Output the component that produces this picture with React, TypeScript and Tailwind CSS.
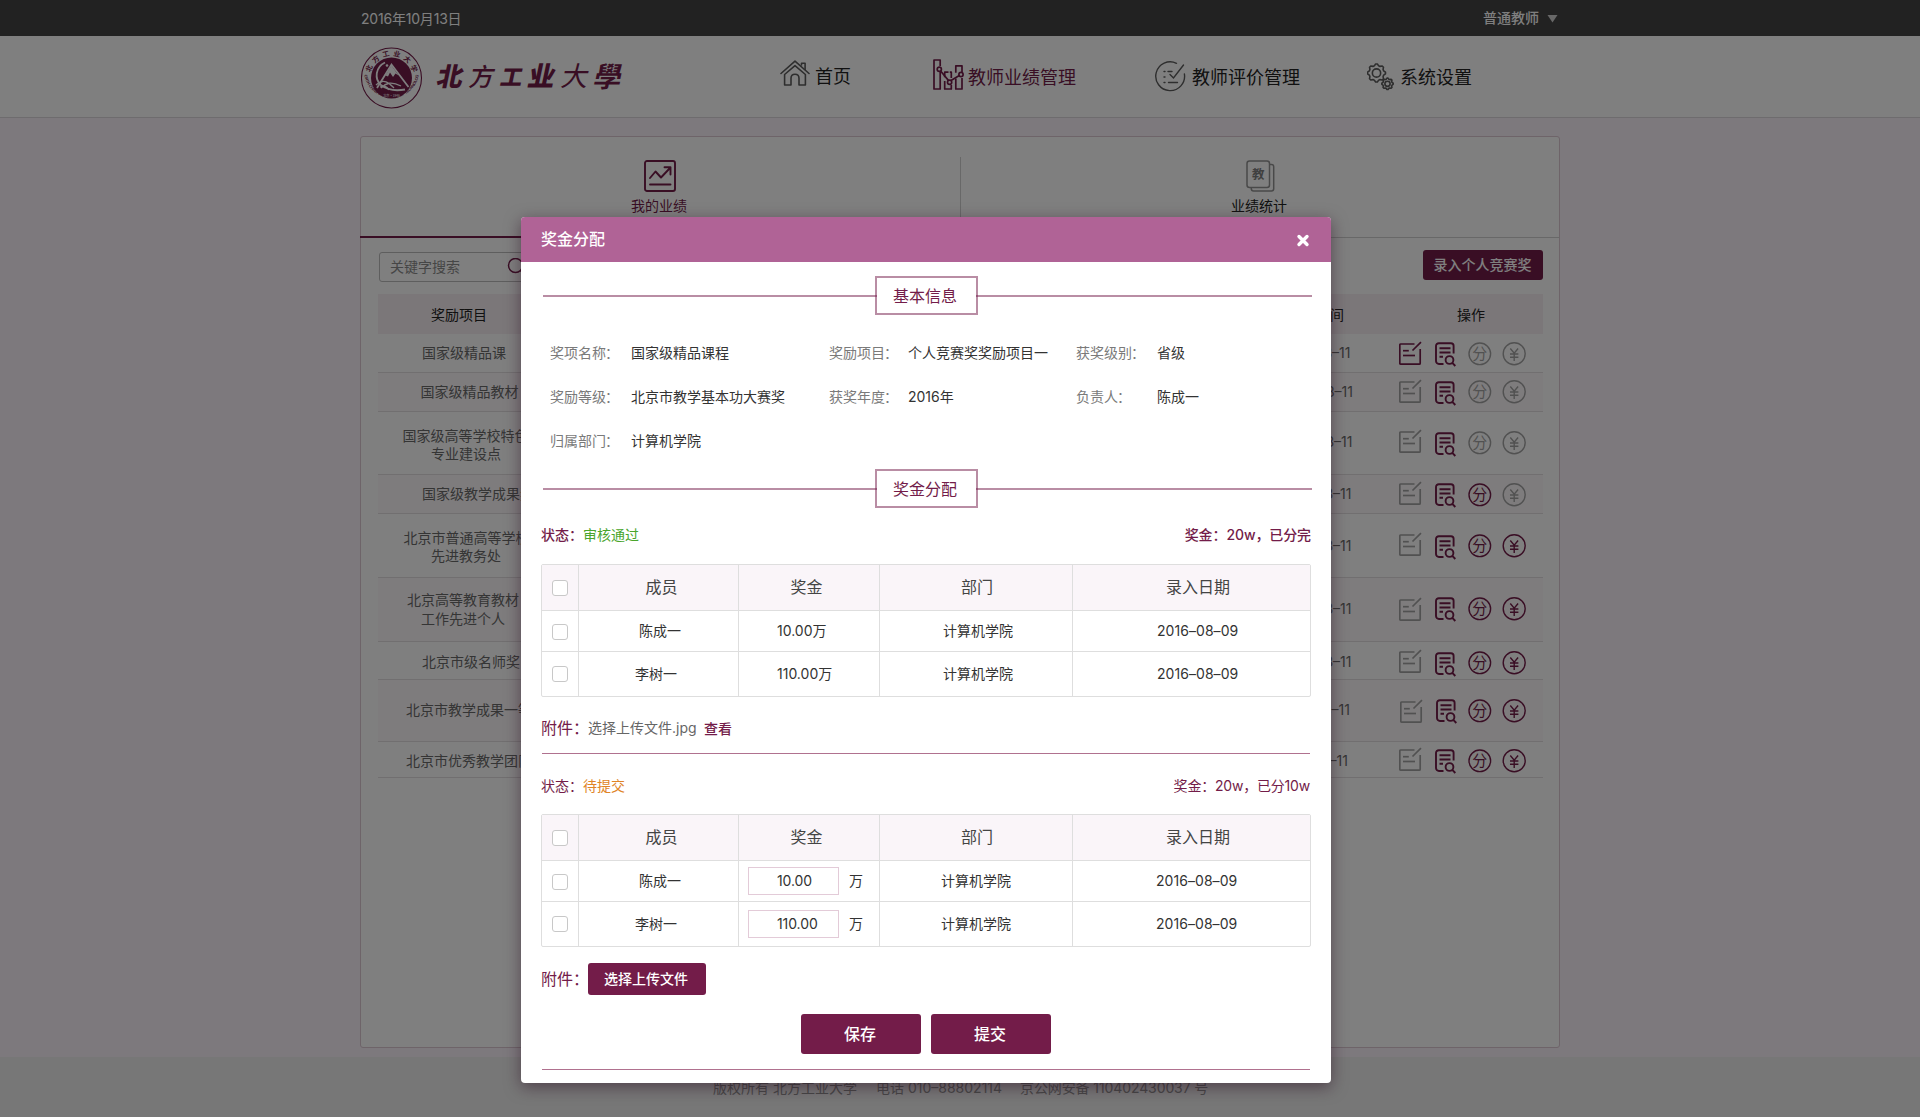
import React from "react";

const BRAND = "#731c49";
const GRAY = "#a3a3a3";

function HomeIcon() {
  return (
    <svg width="30" height="26" viewBox="0 0 30 26" fill="none" stroke="#5c5c5c" strokeWidth="1.6" strokeLinejoin="round" strokeLinecap="round">
      <path d="M1 13.5 15 1.2 29 13.5" />
      <path d="M21.5 5V3.2h3.6V9.5" />
      <path d="M4.6 14.5 15 5.6 25.4 14.5V25H19V18.2c0-2.4-1.6-4-4-4s-4 1.6-4 4V25H4.6Z" />
    </svg>
  );
}

function ChartIcon() {
  return (
    <svg width="31" height="31" viewBox="0 0 31 31" fill="none" stroke={BRAND} strokeWidth="1.7" strokeLinejoin="round">
      <path d="M7.2 7V1H1v29h6.2V13" />
      <path d="M15.5 13.2h-3.8v5M11.7 22v8h6.6v-4M18.3 19v-5.8h-1.5" />
      <path d="M29 13V6.8h-6.2v7M22.8 19.5V30H29V19" />
      <circle cx="6.3" cy="10.2" r="2.1" />
      <circle cx="16.6" cy="23.2" r="2.1" />
      <circle cx="28" cy="15.5" r="2.1" />
      <path d="M7.6 12 15.4 21.4M18 21.6 26.3 16.6" />
    </svg>
  );
}

function ReviewIcon() {
  return (
    <svg width="31" height="31" viewBox="0 0 31 31" fill="none" stroke="#5c5c5c" strokeWidth="1.4" strokeLinecap="round">
      <path d="M21.500 2.300A14.400 14.400 0 1 0 29.400 13" />
      <path d="M28.500 4 18.500 17l-3.500-3.500" />
      <path d="M9 10.500h1M13 10.500h4M9 16h1M9 21.500h1M13.500 21.500h9" />
    </svg>
  );
}

function Gear({ cx, cy, r }: { cx: number; cy: number; r: number }) {
  const pts: string[] = [];
  for (let i = 0; i < 32; i++) {
    const rr = i % 4 < 2 ? r : r * 0.83;
    const a = (i / 32) * Math.PI * 2 - Math.PI / 2 - Math.PI / 32;
    pts.push(`${(cx + rr * Math.cos(a)).toFixed(2)},${(cy + rr * Math.sin(a)).toFixed(2)}`);
  }
  return (
    <>
      <polygon points={pts.join(" ")} />
      <circle cx={cx} cy={cy} r={r * 0.46} />
    </>
  );
}

function GearsIcon() {
  return (
    <svg width="28" height="28" viewBox="0 0 28 28" fill="none" stroke="#5c5c5c" strokeWidth="1.6" strokeLinejoin="round">
      <Gear cx={9.5} cy={10} r={9} />
      <Gear cx={20.5} cy={20.8} r={5.7} />
    </svg>
  );
}

function Seal() {
  return (
    <svg width="62" height="62" viewBox="0 0 62 62">
      <circle cx="30.500" cy="31" r="30" fill="none" stroke={BRAND} strokeWidth="1.100" />
      <circle cx="30.500" cy="31" r="20.500" fill={BRAND} />
      <defs>
        <path id="sealTop" d="M8.500 31a22 22 0 0 1 44 0" />
        <path id="sealBottom" d="M3.300 28a27.600 27.600 0 0 0 54.400 0" />
      </defs>
      <text fill={BRAND} fontSize="7" fontWeight="700" fontFamily="'Noto Sans CJK SC', sans-serif">
        <textPath href="#sealTop" startOffset="50%" textAnchor="middle" textLength="58">北方工业大学</textPath>
      </text>
      <text fill={BRAND} fontSize="4" fontWeight="700" fontFamily="'Liberation Sans', sans-serif">
        <textPath href="#sealBottom" startOffset="50%" textAnchor="middle" textLength="82">NORTH CHINA UNIVERSITY OF TECHNOLOGY</textPath>
      </text>
      <path d="M16 41 30.500 17.500 47.500 40" fill="none" stroke="#fff" strokeWidth="1.800" />
      <path d="M24.500 28.500 30.500 18.500 37.500 28.500 34.500 26.500 32 30 29 25.500 27 29.500Z" fill="#fff" />
      <path d="M24 15.500C14.500 20 13 32 20 38c7 5.500 17 5.800 24 4.500" fill="none" stroke="#fff" strokeWidth="1.800" />
      <path d="M15 38c8-8 14-1 18 3M20 41c5-5 10-7 20-2M28 43c-3-5-6-4-9-3" fill="none" stroke="#fff" strokeWidth="1.300" />
      <circle cx="26" cy="18.500" r="1.300" fill="#fff" />
      <text x="30.500" y="49.500" textAnchor="middle" fill="#fff" fontSize="3.200" fontFamily="'Noto Sans CJK SC', sans-serif">北京·1946</text>
    </svg>
  );
}

function TrendIcon() {
  return (
    <svg width="32" height="32" viewBox="0 0 32 32" fill="none" stroke={BRAND} strokeWidth="1.9" strokeLinejoin="round" strokeLinecap="round">
      <rect x="1" y="1" width="30" height="30" rx="2" />
      <path d="M6 18 11.500 11.500 17 17.500 26 8M20.500 7.300H26.500V14.500" />
      <path d="M6 24.500H26.500" />
    </svg>
  );
}

function StatIcon() {
  return (
    <svg width="29" height="32" viewBox="0 0 29 32" fill="none" stroke="#929292" strokeWidth="1.500">
      <rect x="1" y="1" width="22.500" height="26.500" rx="2.500" />
      <path d="M24 4.500h1.500a2.200 2.200 0 0 1 2.200 2.200V28.800a2.200 2.200 0 0 1-2.200 2.200H7.500A2.200 2.200 0 0 1 5.300 28.800V28" />
      <text x="12.300" y="19" textAnchor="middle" fill="#808080" stroke="none" fontSize="12.500" fontWeight="700" fontFamily="'Noto Sans CJK SC', sans-serif">教</text>
    </svg>
  );
}

function EditIcon({ color }: { color: string }) {
  return (
    <svg width="24" height="25" viewBox="0 0 24 25" fill="none" stroke={color} strokeWidth="1.700" strokeLinejoin="round">
      <path d="M15.500 3H1.800a1 1 0 0 0-1 1V22.200a1 1 0 0 0 1 1H20.200a1 1 0 0 0 1-1V8" />
      <path d="M13.500 9.500 22 1.200" />
      <path d="M4 9.700H9.800" />
      <path d="M4 14.500H16" />
    </svg>
  );
}

function DocIcon() {
  return (
    <svg width="22" height="25" viewBox="0 0 22 25" fill="none" stroke={BRAND} strokeWidth="1.900">
      <path d="M8.500 22H4A3 3 0 0 1 1 19V4A2.800 2.800 0 0 1 3.800 1.200H16A2.600 2.600 0 0 1 18.600 3.800V11.500" />
      <path d="M4.500 6.200H15.500M4.500 10.500H15.500M4.500 14.800H8" />
      <circle cx="14.500" cy="18" r="3.900" />
      <path d="M17.300 20.900 20.300 24" />
    </svg>
  );
}

function FenIcon({ color }: { color: string }) {
  return (
    <svg width="24" height="24" viewBox="0 0 24 24">
      <circle cx="11.800" cy="11.800" r="10.800" fill="none" stroke={color} strokeWidth="1.400" />
      <text x="11.800" y="17.300" textAnchor="middle" fill={color} fontSize="15" fontFamily="'Noto Sans CJK SC', sans-serif">分</text>
    </svg>
  );
}

function YenIcon({ color }: { color: string }) {
  return (
    <svg width="25" height="24" viewBox="0 0 25 24" fill="none" stroke={color} strokeWidth="1.400">
      <circle cx="12.200" cy="11.800" r="11" />
      <path d="M8.300 6.500 12.200 11.200 16.100 6.500M12.200 11V19M8 12H16.400M8 15.200H16.400" />
    </svg>
  );
}

const awards = [
  { h: 39, top: 334, x: 422, lines: ["国家级精品课"], first: 353, mid: 353, gap: 18, dateEnd: 1350.5, edit: 341, doc: 342, circ: 342, on: [true, false, false], dx: 0 },
  { h: 39, top: 373, x: 420.5, lines: ["国家级精品教材"], first: 392, mid: 392, gap: 18, dateEnd: 1353, edit: 379, doc: 381, circ: 380, on: [false, false, false], dx: 0 },
  { h: 63, top: 412, x: 402.5, lines: ["国家级高等学校特色", "专业建设点"], first: 436, mid: 442, gap: 18, dateEnd: 1352.5, edit: 429, doc: 432, circ: 431, on: [false, false, false], dx: 0, x2: 431 },
  { h: 39, top: 475, x: 422, lines: ["国家级教学成果奖"], first: 494, mid: 494, gap: 18, dateEnd: 1351.5, edit: 481, doc: 483, circ: 483, on: [false, true, false], dx: 0 },
  { h: 64, top: 514, x: 403.5, lines: ["北京市普通高等学校", "先进教务处"], first: 538, mid: 546, gap: 18, dateEnd: 1351.5, edit: 532, doc: 535, circ: 534, on: [false, true, true], dx: 0, x2: 431 },
  { h: 64, top: 578, x: 407, lines: ["北京高等教育教材", "工作先进个人"], first: 599.5, mid: 609, gap: 19, dateEnd: 1351.5, edit: 597, doc: 597, circ: 597, on: [false, true, true], dx: 0, x2: 421 },
  { h: 38, top: 642, x: 422, lines: ["北京市级名师奖"], first: 662, mid: 662, gap: 18, dateEnd: 1351.5, edit: 649, doc: 652, circ: 651, on: [false, true, true], dx: 0 },
  { h: 62, top: 680, x: 406, lines: ["北京市教学成果一等奖"], first: 710, mid: 710, gap: 18, dateEnd: 1350, edit: 699, doc: 699, circ: 699, on: [false, true, true], dx: 1 },
  { h: 36, top: 742, x: 406, lines: ["北京市优秀教学团队"], first: 761, mid: 761, gap: 18, dateEnd: 1348, edit: 747, doc: 749, circ: 749, on: [false, true, true], dx: 0 },
];

function AwardRow({ row, shaded }: { row: (typeof awards)[number]; shaded: boolean }) {
  const t = row.top;
  const tone = (v: boolean) => (v ? BRAND : GRAY);
  return (
    <div className={`flex items-start border-b border-[#e2dee0] ${shaded ? "bg-[#fdf9fb]" : ""}`} style={{ height: row.h }}>
      <div className="w-[700px] shrink-0 whitespace-nowrap" style={{ paddingTop: row.first - row.gap / 2 - t }}>
        {row.lines.map((l, i) => (
          <div key={l} style={{ lineHeight: `${row.gap}px`, paddingLeft: (i === 0 ? row.x : (row.x2 ?? row.x)) - 378 }}>
            {l}
          </div>
        ))}
      </div>
      <div className="w-[275px] shrink-0 text-right leading-[18px]" style={{ paddingTop: row.mid - 9 - t, paddingRight: 1353 - row.dateEnd }}>
        2016–08–11
      </div>
      <div className="ml-[46px] w-[36px] shrink-0" style={{ paddingTop: row.edit - t, paddingLeft: row.dx }}>
        <EditIcon color={tone(row.on[0])} />
      </div>
      <div className="w-[33px] shrink-0" style={{ paddingTop: row.doc - t, paddingLeft: row.dx }}>
        <DocIcon />
      </div>
      <div className="w-[34px] shrink-0" style={{ paddingTop: row.circ - t }}>
        <FenIcon color={tone(row.on[1])} />
      </div>
      <div className="shrink-0" style={{ paddingTop: row.circ - t }}>
        <YenIcon color={tone(row.on[2])} />
      </div>
    </div>
  );
}

function TopBar() {
  return (
    <div className="h-9 bg-[#444444] text-white">
      <div className="mx-auto flex h-9 w-[1200px] justify-between pl-px pr-[2px]">
        <span className="pt-[10px] text-[14px] leading-[18px] tracking-[-0.2px]">2016年10月13日</span>
        <span className="flex items-start pt-[9px]">
          <span className="text-[14px] font-medium leading-[18px]">普通教师</span>
          <svg className="ml-[8px] mt-[6px]" width="11" height="8" viewBox="0 0 11 8">
            <path d="M0.500 0H10.500L5.500 7.500Z" fill="#d0d0d0" />
          </svg>
        </span>
      </div>
    </div>
  );
}

function Header() {
  return (
    <header className="h-[82px] border-b border-[#dcd8dc] bg-white text-[18px] leading-[24px] text-[#222]">
      <div className="mx-auto flex h-[81px] w-[1200px] items-start">
        <div className="ml-px mt-[11px] w-[62px]">
          <Seal />
        </div>
        <div className="ml-[12px] mt-[22px] flex w-[190px] -skew-x-12 items-center text-center leading-[38px] text-[#731c49]">
          <span className="w-[31px] text-[26px] font-black">北</span>
          <span className="w-[33px] text-[25px] font-medium">方</span>
          <span className="w-[26px] text-[22px] font-black">工</span>
          <span className="w-[34px] text-[27px] font-black">业</span>
          <span className="w-[33px] text-[27px]">大</span>
          <span className="w-[33px] text-[28px] font-bold">學</span>
        </div>
        <nav className="flex items-start whitespace-nowrap">
          <div className="ml-[155px] flex w-[153px]">
            <span className="mt-[24px] w-[35px]"><HomeIcon /></span>
            <span className="mt-[29px]">首页</span>
          </div>
          <div className="flex w-[222px] text-[#731c49]">
            <span className="mt-[23px] w-[35px]"><ChartIcon /></span>
            <span className="mt-[30px]">教师业绩管理</span>
          </div>
          <div className="flex w-[212px]">
            <span className="mt-[25px] w-[37px]"><ReviewIcon /></span>
            <span className="mt-[30px]">教师评价管理</span>
          </div>
          <div className="flex">
            <span className="mt-[27px] w-[33px]"><GearsIcon /></span>
            <span className="mt-[30px]">系统设置</span>
          </div>
        </nav>
      </div>
    </header>
  );
}

function MainPanel() {
  return (
    <main className="mx-auto mt-[18px] flex h-[912px] w-[1200px] flex-col rounded-[3px] border border-[#dcc8d3] bg-white text-[14px] text-[#6a6a6a]">
      <div className="-ml-px flex h-[101px] w-[1200px] shrink-0 text-[#222]">
        <div className="flex w-[600px] flex-col items-center border-b-2 border-[#731c49] pt-[23px] text-[#731c49]">
          <TrendIcon />
          <span className="mr-[2px] mt-[5px] leading-[18px]">我的业绩</span>
        </div>
        <div className="flex w-[600px] border-b border-[#d0d0d0]">
          <div className="mt-[20px] h-[62px] w-px bg-[#d0d0d0]" />
          <div className="flex flex-1 flex-col items-center pt-[23px]">
            <StatIcon />
            <span className="mr-[3px] mt-[5px] leading-[18px]">业绩统计</span>
          </div>
        </div>
      </div>
      <div className="flex items-start justify-between pl-[18px] pr-[16px]">
        <div className="mt-[14px] flex h-[30px] w-[160px] rounded-[3px] border border-[#bcbcbc] pl-[10px] pt-[5px]">
          <span className="w-[117px] leading-[18px] text-[#8c8c8c]">关键字搜索</span>
          <svg width="20" height="20" viewBox="0 0 20 20" fill="none" stroke={BRAND} strokeWidth="1.500">
            <circle cx="8.500" cy="7.500" r="7" />
            <path d="M13.500 12.500 18 17.500" />
          </svg>
        </div>
        <button className="mt-[12px] h-[30px] w-[120px] rounded-[3px] bg-[#731c49] pr-px text-[14px] font-medium leading-[30px] text-white">录入个人竞赛奖</button>
      </div>
      <div className="ml-[17px] mt-[12px] flex h-[40px] w-[1165px] shrink-0 bg-[#f7eff2] pt-[12px] leading-[18px] text-[#222]">
        <span className="w-[700px] pl-[53px]">奖励项目</span>
        <span className="w-[266px] text-right">获奖时间</span>
        <span className="ml-[113px]">操作</span>
      </div>
      <div className="ml-[17px] w-[1165px]">
        {awards.map((r, i) => (
          <AwardRow key={r.top} row={r} shaded={i % 2 === 1} />
        ))}
      </div>
    </main>
  );
}

function SectionTitle({ children }: { children: string }) {
  return (
    <div className="ml-[22px] flex h-[39px] w-[769px] items-center">
      <div className="-mr-[2px] h-[2px] w-[334px] bg-[#731c49]/50" />
      <div className="h-[39px] w-[103px] border-2 border-[#731c49]/50 pr-[3px] text-center text-[16px] leading-[37px] text-[#731c49]">{children}</div>
      <div className="-ml-[2px] h-[2px] flex-1 bg-[#731c49]/50" />
    </div>
  );
}

function Info({ label, narrow = false, children }: { label: string; narrow?: boolean; children: string }) {
  return (
    <div className="flex whitespace-nowrap leading-[44px]">
      <span className={`text-[#7a7a7a] ${narrow ? "w-[79px]" : "w-[81px]"}`}>
        {label}
        <span className="-ml-px">：</span>
      </span>
      <span className="text-[#333]">{children}</span>
    </div>
  );
}

function Check() {
  return <span className="block h-4 w-4 rounded-[3px] border border-[#c8c8c8] bg-white" />;
}

const GRID = "grid grid-cols-[37px_160px_141px_193px_237px]";
const CELL = "border-r border-[#dedede]";

function BonusTable({ editable }: { editable: boolean }) {
  const rows = [
    { name: "陈成一", amount: "10.00", h: "h-[41px]", lh: "leading-[39px]", pad: "pl-[60px]", ck: "pt-[13px]", inp: "mt-[6px]" },
    { name: "李树一", amount: "110.00", h: "h-[44px]", lh: "leading-[43px]", pad: "pl-[56px]", ck: "pt-[14px]", inp: "mt-[8px]" },
  ];
  return (
    <div className="ml-5 w-[770px] rounded-[2px] border border-[#dedede] text-[14px] text-[#333]">
      <div className={`${GRID} h-[46px] border-b border-[#dedede] bg-[#faf5f9] text-center text-[16px] leading-[45px] text-[#444]`}>
        <div className={`${CELL} pl-[10px] pt-[15px]`}><Check /></div>
        <div className={`${CELL} pl-[6px]`}>成员</div>
        <div className={`${CELL} pr-[5px]`}>奖金</div>
        <div className={`${CELL} pl-[2px]`}>部门</div>
        <div className="pl-[13px]">录入日期</div>
      </div>
      {rows.map((r, i) => (
        <div key={r.name} className={`${GRID} ${r.h} ${r.lh} ${i === 0 ? "border-b border-[#dedede]" : ""}`}>
          <div className={`${CELL} pl-[10px] ${r.ck}`}><Check /></div>
          <div className={`${CELL} ${r.pad}`}>{r.name}</div>
          {editable ? (
            <div className={`${CELL} flex items-start pl-[9px]`}>
              <div className={`${r.inp} h-[28px] w-[91px] border border-[#e3cbd8] pl-[28px] leading-[26px] tracking-[-0.1px]`}>{r.amount}</div>
              <span className="pl-[10px]">万</span>
            </div>
          ) : (
            <div className={`${CELL} pl-[38px]`}>{r.amount}万</div>
          )}
          <div className={`${CELL} ${editable ? "pl-[61px]" : "pl-[63px]"}`}>计算机学院</div>
          <div className={`tracking-[0.05px] ${editable ? "pl-[83px]" : "pl-[84px]"}`}>2016–08–09</div>
        </div>
      ))}
    </div>
  );
}

function Dialog() {
  return (
    <section className="absolute left-[521px] top-[217px] h-[866px] w-[810px] overflow-hidden rounded-[4px] bg-white text-[14px] shadow-[0_4px_16px_rgba(40,10,30,0.5)]">
      <div className="flex h-[45px] items-center justify-between bg-[#b06396] pl-[20px] pr-[21px] text-white">
        <span className="text-[16px] font-medium leading-[45px]">奖金分配</span>
        <svg width="14" height="14" viewBox="0 0 14 14" stroke="#fff" strokeWidth="3.400" strokeLinecap="round">
          <path d="M3 3.500 11 11.500M11 3.500 3 11.500" />
        </svg>
      </div>
      <div className="h-[14px]" />
      <SectionTitle>基本信息</SectionTitle>
      <div className="ml-[29px] mt-[16px] grid h-[132px] grid-cols-[279px_247px_200px] grid-rows-3">
        <Info label="奖项名称">国家级精品课程</Info>
        <Info label="奖励项目" narrow>个人竞赛奖奖励项目一</Info>
        <Info label="获奖级别">省级</Info>
        <Info label="奖励等级">北京市教学基本功大赛奖</Info>
        <Info label="获奖年度" narrow>2016年</Info>
        <Info label="负责人">陈成一</Info>
        <Info label="归属部门">计算机学院</Info>
      </div>
      <div className="h-[6px]" />
      <SectionTitle>奖金分配</SectionTitle>
      <div className="mt-[18px] flex h-[19px] justify-between pl-[20px] pr-[20px] leading-[18px] text-[#731c49]">
        <span className="font-medium">状态：<span className="font-normal text-[#4aa52c]">审核通过</span></span>
        <span className="font-medium tracking-[-0.1px]">奖金：20w，已分完</span>
      </div>
      <div className="h-[19px]" />
      <BonusTable editable={false} />
      <div className="mt-[21px] flex h-[20px] items-center whitespace-nowrap pl-[20px] leading-[20px]">
        <span className="w-[47px] text-[16px] text-[#731c49]">附件：</span>
        <span className="w-[116px] text-[#666]">选择上传文件.jpg</span>
        <span className="pt-[2px] font-medium text-[#731c49]">查看</span>
      </div>
      <div className="ml-[21px] mt-[15px] h-px w-[768px] bg-[#b0718f]" />
      <div className="mt-[23px] flex h-[18px] justify-between pl-[20px] pr-[21px] leading-[18px] text-[#731c49]">
        <span>状态：<span className="text-[#e08427]">待提交</span></span>
        <span className="tracking-[-0.2px]">奖金：20w，已分10w</span>
      </div>
      <div className="h-[19px]" />
      <BonusTable editable />
      <div className="mt-[16px] flex h-[32px] items-center pl-[20px]">
        <span className="w-[47px] whitespace-nowrap text-[16px] leading-[30px] text-[#731c49]">附件：</span>
        <button className="h-[32px] w-[118px] rounded-[3px] bg-[#731c49] pr-[2px] font-medium leading-[32px] text-white">选择上传文件</button>
      </div>
      <div className="mt-[19px] flex gap-[10px] pl-[280px] text-[16px] font-medium text-white">
        <button className="h-[40px] w-[120px] rounded-[3px] bg-[#731c49] pr-[2px]">保存</button>
        <button className="h-[40px] w-[120px] rounded-[3px] bg-[#731c49] pr-[2px]">提交</button>
      </div>
      <div className="ml-[21px] mt-[15px] h-px w-[768px] bg-[#b0718f]" />
    </section>
  );
}

export default function App() {
  return (
    <div className="relative h-[1117px] w-[1920px] overflow-hidden bg-[#faf2fa] font-[Inter,'Noto_Sans_CJK_SC',sans-serif]">
      <TopBar />
      <Header />
      <MainPanel />
      <footer className="mt-[9px] flex h-[60px] whitespace-nowrap bg-[#eeeeee] pl-[713px] pt-[22px] text-[14px] leading-[18px] text-[#8f8f8f]">
        <span className="w-[163px]">版权所有 北方工业大学</span>
        <span className="w-[144px]">电话 010–88802114</span>
        <span className="tracking-[-0.1px]">京公网安备 110402430037 号</span>
      </footer>
      <div className="absolute inset-0 bg-black/50" />
      <Dialog />
    </div>
  );
}
